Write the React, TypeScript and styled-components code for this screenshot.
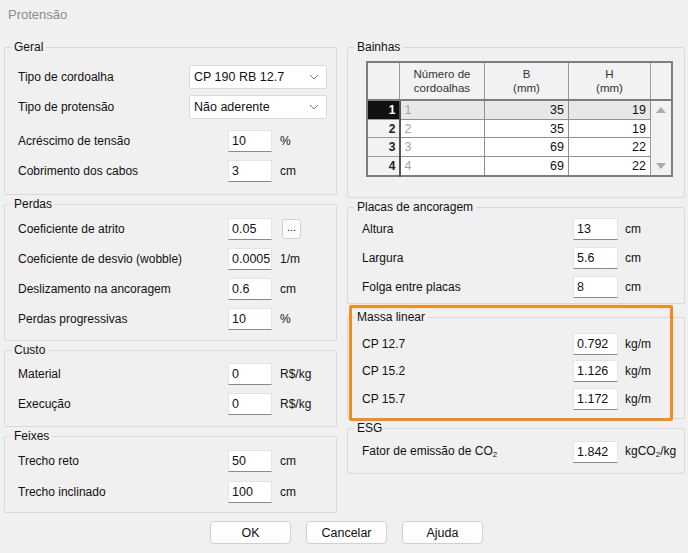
import React from "react";
import styled, { createGlobalStyle } from "styled-components";

const GlobalStyle = createGlobalStyle`
  body {
    margin: 0;
    background: #f0f0f0;
    font-family: "Liberation Sans", Arial, sans-serif;
    font-size: 12px;
    color: #111;
  }
`;

const Window = styled.div`
  width: 688px;
  height: 553px;
  box-sizing: border-box;
  padding: 0 3px 0 4px;
  background: #f0f0f0;
`;

const TitleBar = styled.div`
  height: 47px;
  padding: 7px 0 0 4px;
  box-sizing: border-box;
  font-size: 13px;
  color: #8c8c8c;
`;

const Columns = styled.div`
  display: flex;
  gap: 10px;
  align-items: flex-start;
`;

const Column = styled.div<{ $w: number }>`
  width: ${(p) => p.$w}px;
  display: flex;
  flex-direction: column;
  gap: 9px;
`;

const Group = styled.div<{ $pb: number; $mt?: number }>`
  position: relative;
  border: 1px solid #d9d9d9;
  border-radius: 2px;
  padding-bottom: ${(p) => p.$pb}px;
  margin-top: ${(p) => p.$mt ?? 0}px;
`;

const Legend = styled.div`
  margin: -8px 0 0 6px;
  padding: 0 3px;
  width: fit-content;
  line-height: 14px;
  background: #f0f0f0;
  color: #111;
`;

const Rows = styled.div<{ $pt: number }>`
  margin-top: ${(p) => p.$pt}px;
  display: flex;
  flex-direction: column;
`;

const Row = styled.div<{ $h: number; $pl: number }>`
  height: ${(p) => p.$h}px;
  display: flex;
  align-items: center;
  padding-left: ${(p) => p.$pl}px;
`;

const Label = styled.div`
  flex: 1;
  white-space: nowrap;
  sub {
    font-size: 8px;
    vertical-align: -2px;
  }
`;

const Input = styled.div<{ $w: number }>`
  width: ${(p) => p.$w}px;
  height: 22px;
  box-sizing: border-box;
  background: #fff;
  border: 1px solid #e4e4e4;
  border-bottom: 1px solid #8a8a8a;
  padding: 0 3px;
  display: flex;
  align-items: center;
  font-size: 12.5px;
`;

const Unit = styled.div<{ $w: number; $pl: number }>`
  width: ${(p) => p.$w}px;
  box-sizing: border-box;
  padding-left: ${(p) => p.$pl}px;
  white-space: nowrap;
  display: flex;
  align-items: center;
  sub {
    font-size: 8px;
    vertical-align: -2px;
  }
`;

const DotsButton = styled.div`
  margin-left: 2px;
  width: 19px;
  height: 20px;
  box-sizing: border-box;
  border: 1px solid #d0d0d0;
  border-radius: 3px;
  background: #fbfbfb;
  font-size: 11px;
  display: flex;
  align-items: flex-end;
  justify-content: center;
  padding-bottom: 5px;
`;

const Combo = styled.div`
  width: 138px;
  height: 24px;
  margin-right: 9px;
  box-sizing: border-box;
  background: #fff;
  border: 1px solid #dadada;
  border-radius: 2px;
  display: flex;
  align-items: center;
  justify-content: space-between;
  padding: 0 7px 0 4px;
  font-size: 12.5px;
`;

const Highlight = styled.div`
  position: absolute;
  top: -13px;
  left: 1px;
  right: 11px;
  bottom: -3px;
  border: 3px solid #f58b1f;
  border-radius: 2px;
  pointer-events: none;
`;

const TableWrap = styled.div`
  margin: 0 19px 0 18px;
`;

const Grid = styled.table`
  border-collapse: collapse;
  table-layout: fixed;
  width: 299px;
  border: 2px solid #7d7d7d;
  font-size: 12.5px;
`;

const HeadCell = styled.th<{ $w: number }>`
  width: ${(p) => p.$w}px;
  height: 36px;
  padding: 0;
  background: #f2f2f2;
  border: 1px solid #9a9a9a;
  border-bottom: 2px solid #7d7d7d;
  font-weight: normal;
  font-size: 11.5px;
  line-height: 14px;
  color: #333;
  text-align: center;
`;

const RowHead = styled.td<{ $active: boolean }>`
  height: 17.5px;
  padding: 0 3px 0 0;
  text-align: right;
  font-weight: bold;
  font-size: 12px;
  background: ${(p) => (p.$active ? "#111" : "#f2f2f2")};
  color: ${(p) => (p.$active ? "#fff" : "#222")};
  border: 1px solid #9a9a9a;
  border-right: 2px solid #555;
`;

const Cell = styled.td<{ $active: boolean; $muted?: boolean }>`
  padding: 0 4px;
  text-align: ${(p) => (p.$muted ? "left" : "right")};
  color: ${(p) => (p.$muted ? "#a3a3a3" : "#111")};
  background: ${(p) => (p.$active ? "#e8e8ea" : "#fff")};
  border: 1px solid #8f8f8f;
`;

const ScrollCell = styled.td`
  padding: 0;
  background: #f2f2f2;
  border: 1px solid #9a9a9a;
  vertical-align: top;
`;

const ScrollTrack = styled.div`
  height: 74px;
  display: flex;
  flex-direction: column;
  justify-content: space-between;
  align-items: center;
  padding: 6px 0;
  box-sizing: border-box;
`;

const Footer = styled.div`
  margin-top: 8px;
  display: flex;
  justify-content: center;
  gap: 15px;
  padding-left: 4px;
`;

const Button = styled.div`
  width: 81px;
  height: 23px;
  box-sizing: border-box;
  border: 1px solid #d0d0d0;
  border-radius: 4px;
  background: #fdfdfd;
  display: flex;
  align-items: center;
  justify-content: center;
  font-size: 12.5px;
`;

const Chevron = () => (
  <svg width="10" height="6" viewBox="0 0 10 6">
    <polyline points="1,1 5,5 9,1" fill="none" stroke="#777" strokeWidth="1" />
  </svg>
);

const Arrow = ({ up }: { up: boolean }) => (
  <svg width="10" height="6" viewBox="0 0 10 6">
    <polygon points={up ? "0,6 5,0 10,6" : "0,0 5,6 10,0"} fill="#ababab" />
  </svg>
);

type FieldProps = {
  label: React.ReactNode;
  value: string;
  unit?: React.ReactNode;
  h: number;
  right?: boolean;
  extra?: React.ReactNode;
};

const Field = ({ label, value, unit, h, right, extra }: FieldProps) => (
  <Row $h={h} $pl={right ? 14 : 13}>
    <Label>{label}</Label>
    <Input $w={right ? 45 : 44}>{value}</Input>
    <Unit $w={right ? 66 : 64} $pl={right ? 7 : 8}>
      {extra}
      {unit}
    </Unit>
  </Row>
);

const bainhas = [
  { n: "1", b: "35", h: "19" },
  { n: "2", b: "35", h: "19" },
  { n: "3", b: "69", h: "22" },
  { n: "4", b: "69", h: "22" },
];

const App = () => {
  return (
    <>
      <GlobalStyle />
      <Window>
        <TitleBar>Protensão</TitleBar>
        <Columns>
          <Column $w={333}>
            <Group $pb={8}>
              <Legend>Geral</Legend>
              <Rows $pt={8}>
                <Row $h={30} $pl={13}>
                  <Label>Tipo de cordoalha</Label>
                  <Combo>
                    CP 190 RB 12.7
                    <Chevron />
                  </Combo>
                </Row>
                <Row $h={30} $pl={13}>
                  <Label>Tipo de protensão</Label>
                  <Combo>
                    Não aderente
                    <Chevron />
                  </Combo>
                </Row>
                <div style={{ height: 4 }} />
                <Field h={30} label="Acréscimo de tensão" value="10" unit="%" />
                <Field h={30} label="Cobrimento dos cabos" value="3" unit="cm" />
              </Rows>
            </Group>

            <Group $pb={6}>
              <Legend>Perdas</Legend>
              <Rows $pt={3}>
                <Field h={30} label="Coeficiente de atrito" value="0.05" extra={<DotsButton>...</DotsButton>} />
                <Field h={30} label="Coeficiente de desvio (wobble)" value="0.0005" unit="1/m" />
                <Field h={30} label="Deslizamento na ancoragem" value="0.6" unit="cm" />
                <Field h={30} label="Perdas progressivas" value="10" unit="%" />
              </Rows>
            </Group>

            <Group $pb={7}>
              <Legend>Custo</Legend>
              <Rows $pt={1}>
                <Field h={31} label="Material" value="0" unit="R$/kg" />
                <Field h={30} label="Execução" value="0" unit="R$/kg" />
              </Rows>
            </Group>

            <Group $pb={5}>
              <Legend>Feixes</Legend>
              <Rows $pt={2}>
                <Field h={31} label="Trecho reto" value="50" unit="cm" />
                <Field h={31} label="Trecho inclinado" value="100" unit="cm" />
              </Rows>
            </Group>
          </Column>

          <Column $w={338}>
            <Group $pb={20}>
              <Legend>Bainhas</Legend>
              <Rows $pt={7}>
                <TableWrap>
                  <Grid>
                    <thead>
                      <tr>
                        <HeadCell $w={31} />
                        <HeadCell $w={84}>
                          Número de
                          <br />
                          cordoalhas
                        </HeadCell>
                        <HeadCell $w={83}>
                          B
                          <br />
                          (mm)
                        </HeadCell>
                        <HeadCell $w={81}>
                          H
                          <br />
                          (mm)
                        </HeadCell>
                        <HeadCell $w={20} />
                      </tr>
                    </thead>
                    <tbody>
                      {bainhas.map((r, i) => (
                        <tr key={r.n}>
                          <RowHead $active={i === 0}>{r.n}</RowHead>
                          <Cell $active={i === 0} $muted>
                            {r.n}
                          </Cell>
                          <Cell $active={i === 0}>{r.b}</Cell>
                          <Cell $active={i === 0}>{r.h}</Cell>
                          {i === 0 && (
                            <ScrollCell rowSpan={4}>
                              <ScrollTrack>
                                <Arrow up />
                                <Arrow up={false} />
                              </ScrollTrack>
                            </ScrollCell>
                          )}
                        </tr>
                      ))}
                    </tbody>
                  </Grid>
                </TableWrap>
              </Rows>
            </Group>

            <Group $pb={1}>
              <Legend>Placas de ancoragem</Legend>
              <Rows $pt={0}>
                <Field right h={29} label="Altura" value="13" unit="cm" />
                <Field right h={29} label="Largura" value="5.6" unit="cm" />
                <Field right h={30} label="Folga entre placas" value="8" unit="cm" />
              </Rows>
            </Group>

            <Group $pb={5} $mt={4}>
              <Highlight />
              <Legend>Massa linear</Legend>
              <Rows $pt={6}>
                <Field right h={27.5} label="CP 12.7" value="0.792" unit="kg/m" />
                <Field right h={27.5} label="CP 15.2" value="1.126" unit="kg/m" />
                <Field right h={27.5} label="CP 15.7" value="1.172" unit="kg/m" />
              </Rows>
            </Group>

            <Group $pb={6}>
              <Legend>ESG</Legend>
              <Rows $pt={2}>
                <Field
                  right
                  h={30}
                  label={
                    <span>
                      Fator de emissão de CO<sub>2</sub>
                    </span>
                  }
                  value="1.842"
                  unit={
                    <span>
                      kgCO<sub>2</sub>/kg
                    </span>
                  }
                />
              </Rows>
            </Group>
          </Column>
        </Columns>

        <Footer>
          <Button>OK</Button>
          <Button>Cancelar</Button>
          <Button>Ajuda</Button>
        </Footer>
      </Window>
    </>
  );
};

export default App;
